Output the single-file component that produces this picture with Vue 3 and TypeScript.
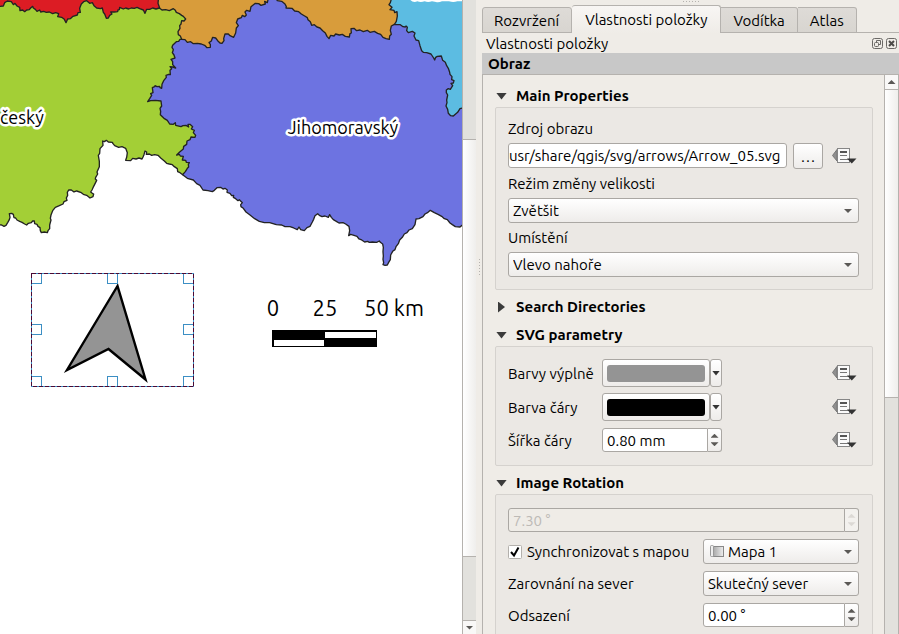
<script setup lang="ts">
import { reactive, ref } from 'vue'

const tabs = ['Rozvržení', 'Vlastnosti položky', 'Vodítka', 'Atlas']
const activeTab = ref('Vlastnosti položky')

const open = reactive({ main: true, search: false, svg: true, rotation: true })

const source = ref('usr/share/qgis/svg/arrows/Arrow_05.svg')
const resizeMode = ref('Zvětšit')
const placement = ref('Vlevo nahoře')
const strokeWidth = ref('0.80 mm')
const rotation = ref('7.30 °')
const syncWithMap = ref(true)
const map = ref('Mapa 1')
const north = ref('Skutečný sever')
const offset = ref('0.00 °')

const colors = [
  { id: 'fill', label: 'Barvy výplně', value: '#949494' },
  { id: 'stroke', label: 'Barva čáry', value: '#000000' },
]

const handles = [
  [31, 273], [107, 273], [183, 273],
  [31, 324], [183, 324],
  [31, 376], [107, 376], [183, 376],
]
</script>

<template>
  <div class="window">
    <main class="canvas">
      <svg class="map" viewBox="0 0 462 634" preserveAspectRatio="xMinYMin slice" role="img" aria-label="Mapa">
        <g transform="scale(0.33333)" stroke="#232323" stroke-width="4" stroke-linejoin="round">
          <path fill="#dc1c24" stroke="none" d="M0 0H478V90H0Z" />
          <path fill="#d89c3b" d="M476 -10L474 10L479 24L476 32L500 160L1240 160L1240 -10Z" />
          <path fill="#5cbce2" d="M1176 -10L1171 8L1167 14L1176 22L1170 29L1182 31L1184 38L1191 35L1192 48L1189 64L1184 72L1240 300L1340 360L1400 330L1400 -10Z" />
          <path fill="#a3cf36" d="M-10 22L0 19L10 18L14 8L22 3L34 5L40 14L45 10L51 18L59 22L60 32L68 30L74 35L80 30L88 29L92 24L98 19L100 24L106 28L111 34L119 30L122 36L131 34L139 37L148 36L158 41L167 38L176 41L173 50L185 52L193 58L198 68L203 57L211 56L219 49L232 45L234 38L241 37L239 25L244 12L251 5L260 2L269 10L277 8L282 17L290 24L301 26L307 24L310 37L314 42L319 55L325 54L329 46L336 42L332 36L343 36L353 35L354 30L358 29L359 22L370 27L377 24L386 27L394 24L403 25L411 22L419 26L430 30L435 40L440 28L449 28L458 24L468 27L478 24L486 30L497 29L508 32L520 26L526 31L529 37L538 41L545 46L550 49L557 57L552 63L545 62L543 72L539 77L540 85L534 95L535 104L541 108L545 118L620 350L610 470L548 524L540 518L533 515L532 506L523 500L517 494L508 492L500 490L493 483L483 475L474 466L464 464L455 466L448 462L439 463L440 456L435 453L432 464L429 471L426 477L417 474L408 477L398 475L392 482L377 481L380 472L382 458L377 445L366 440L356 442L344 437L339 431L337 427L325 426L319 421L313 425L308 423L309 436L300 446L299 460L295 466L298 484L298 500L291 516L293 522L287 532L286 537L290 541L281 559L276 570L272 576L277 580L281 582L279 590L270 594L260 586L250 583L244 578L230 573L222 576L214 570L206 570L202 577L203 586L199 594L201 601L192 605L189 612L178 617L166 622L158 632L153 645L151 655L153 660L149 675L149 686L144 692L142 698L133 696L124 698L121 692L120 683L114 679L111 673L104 671L103 663L98 663L94 668L85 670L80 675L74 672L66 667L59 664L51 660L47 654L42 653L40 643L35 640L28 641L30 652L28 659L23 668L18 676L12 679L5 675L-10 674Z" />
          <path fill="#6d73e1" d="M545 118L555 119L562 127L572 125L580 131L592 130L604 132L614 136L621 143L631 142L631 133L627 128L634 123L638 112L647 114L653 122L660 129L666 130L672 122L671 116L675 102L685 102L690 107L701 112L707 99L709 84L715 77L709 68L713 57L724 53L727 46L734 50L739 45L735 36L740 31L750 34L753 20L766 10L776 11L783 16L796 12L794 4L802 8L806 -10H826L832 2L845 4L855 12L859 20L858 24L876 25L884 33L896 35L904 42L914 48L922 53L924 59L931 65L935 76L943 74L951 81L960 84L968 92L976 99L981 109L987 116L992 106L1002 108L1007 102L1018 105L1027 103L1036 109L1048 111L1050 101L1054 99L1053 86L1062 85L1070 92L1080 90L1090 95L1102 91L1110 97L1123 94L1133 100L1142 103L1149 112L1158 116L1168 118L1169 108L1174 103L1171 91L1174 78L1183 73L1192 74L1201 74L1209 80L1216 81L1218 78L1222 82L1220 92L1225 98L1237 94L1245 99L1242 108L1248 120L1256 122L1260 137L1265 152L1270 157L1280 158L1293 162L1301 174L1304 180L1307 172L1312 169L1324 168L1328 181L1336 187L1340 197L1345 205L1349 217L1350 223L1356 230L1355 239L1362 242L1360 249L1353 250L1358 257L1351 268L1345 266L1339 270L1339 278L1343 285L1340 300L1341 308L1338 318L1343 328L1345 340L1352 347L1360 348L1373 337L1380 326L1400 321V672L1386 676L1380 681L1366 680L1357 674L1350 669L1342 659L1333 656L1325 649L1314 643L1303 638L1291 631L1284 637L1275 642L1269 650L1257 656L1248 657L1245 674L1237 686L1227 690L1221 698L1213 702L1207 712L1199 720L1195 731L1188 740L1185 749L1178 754L1172 765L1171 779L1166 787L1162 795L1155 796L1149 794L1151 788L1149 778L1150 768L1149 755L1150 742L1148 732L1141 727L1138 723L1130 727L1117 726L1108 727L1103 724L1094 726L1085 720L1077 717L1071 709L1062 706L1052 703L1046 707L1049 692L1047 679L1037 672L1029 668L1017 669L1009 664L1000 659L994 652L989 644L985 652L975 648L966 650L958 646L953 641L945 647L941 658L937 666L930 679L921 683L913 692L902 689L897 681L892 689L881 684L870 680L855 680L845 675L829 674L809 668L793 668L778 664L764 656L750 645L738 636L730 625L723 620L722 614L727 608L718 599L714 602L707 596L700 592L701 586L695 587L690 580L681 577L682 570L675 565L669 567L662 562L651 563L643 571L637 575L624 572L609 570L600 556L590 551L580 540L562 535L548 524L556 515L562 505L566 501L565 493L568 488L559 487L557 481L547 480L550 469L541 468L538 463L530 465L539 456L550 447L551 439L560 433L561 423L570 419L573 411L585 412L587 406L580 398L583 391L574 387L578 380L570 373L564 373L566 381L558 376L549 377L543 380L527 376L526 368L520 373L509 372L502 361L492 355L481 344L482 334L480 325L485 318L483 303L466 301L452 302L443 305L449 296L455 286L452 281L459 278L457 263L464 260L465 257L471 260L479 259L480 263L485 265L486 253L491 242L499 232L498 226L506 223L511 224L510 211L515 206L510 200L518 201L527 204L518 194L518 185L513 178L525 174L522 165L517 158L520 149L516 142L518 136L529 125L536 124L540 118Z" />
          <path fill="#fff" stroke="none" d="M1231 0Q1240 9 1252 4Q1262 8 1274 4Q1284 8 1296 4L1308 6Q1316 8 1326 4H1347Q1360 8 1372 4H1386V0Z" />
        </g>

        <g class="map-label">
          <text x="0" y="124">český</text>
          <text x="343" y="134" text-anchor="middle">Jihomoravský</text>
        </g>

        <path d="M117.5 286L67 370L108.5 349L145.5 379.5Z" fill="#949494" stroke="#000" stroke-width="2.4" />
        <g fill="none" stroke="#3c8fc4" shape-rendering="crispEdges">
          <rect v-for="[x, y] in handles" :key="`${x}-${y}`" :x="x + 0.5" :y="y + 0.5" width="10" height="10" />
          <rect x="31.5" y="273.5" width="162" height="113" />
          <rect x="31.5" y="273.5" width="162" height="113" stroke="#4b0a35" stroke-dasharray="4 2" />
        </g>

        <g class="scale-label" text-anchor="middle">
          <text x="273" y="316">0</text>
          <text x="325" y="316">25</text>
          <text x="394" y="316">50 km</text>
        </g>
        <path d="M272 330H377V347H272Z" fill="#000" />
        <path d="M325 332H376V338H325ZM274 340H324V346H274Z" fill="#fff" />
      </svg>
    </main>

    <div class="scrollbar map-scroll" aria-hidden="true">
      <span class="trough-top"></span>
      <span class="thumb"></span>
      <span class="trough-bottom"></span>
      <span class="step"><i class="tri down"></i></span>
    </div>

    <div class="splitter" aria-hidden="true"><i v-for="n in 6" :key="n"></i></div>

    <aside class="dock">
      <div class="grip" aria-hidden="true"><i v-for="n in 6" :key="n"></i></div>
      <nav class="tabs" role="tablist">
        <button
          v-for="tab in tabs"
          :key="tab"
          type="button"
          role="tab"
          class="tab"
          :class="{ active: tab === activeTab }"
          :aria-selected="tab === activeTab"
          @click="activeTab = tab"
        >{{ tab }}</button>
      </nav>

      <header class="dock-title">
        <span>Vlastnosti položky</span>
        <button type="button" class="title-button" aria-label="Odpojit">
          <svg viewBox="0 0 12 12" fill="none" stroke="#6b6966">
            <rect x="0.5" y="0.5" width="10" height="10" rx="2" />
            <path d="M4.5 4V2.5H8.5V6.5H7" /><rect x="2.5" y="4.5" width="4" height="4" rx="1" />
          </svg>
        </button>
        <button type="button" class="title-button" aria-label="Zavřít">
          <svg viewBox="0 0 12 12" fill="none" stroke="#6b6966">
            <rect x="0.5" y="0.5" width="10" height="10" rx="2" />
            <path d="M3 3L8 8M8 3L3 8" stroke="#4c4a48" stroke-width="2" />
          </svg>
        </button>
      </header>
      <h1 class="item-title">Obraz</h1>

      <div class="body">
        <div class="content">
          <section>
            <button type="button" class="heading" :aria-expanded="open.main" @click="open.main = !open.main">
              <i class="marker" :class="{ closed: !open.main }"></i>Main Properties
            </button>
            <div v-if="open.main" class="group main-group">
              <label for="source">Zdroj obrazu</label>
              <div class="source-row">
                <input id="source" v-model="source" type="text" class="field path" />
                <button type="button" class="browse">…</button>
                <button type="button" class="override" aria-label="Datově definované přepsání">
                  <svg viewBox="0 0 26 18"><use href="#override-icon" /></svg>
                </button>
              </div>
              <label for="resize">Režim změny velikosti</label>
              <div class="combo">
                <select id="resize" v-model="resizeMode"><option>Zvětšit</option></select>
              </div>
              <label for="placement">Umístění</label>
              <div class="combo">
                <select id="placement" v-model="placement"><option>Vlevo nahoře</option></select>
              </div>
            </div>
          </section>

          <section>
            <button type="button" class="heading" :aria-expanded="open.search" @click="open.search = !open.search">
              <i class="marker" :class="{ closed: !open.search }"></i>Search Directories
            </button>
          </section>

          <section>
            <button type="button" class="heading" :aria-expanded="open.svg" @click="open.svg = !open.svg">
              <i class="marker" :class="{ closed: !open.svg }"></i>SVG parametry
            </button>
            <div v-if="open.svg" class="group svg-group">
              <div v-for="color in colors" :key="color.id" class="param-row">
                <label :for="color.id">{{ color.label }}</label>
                <div class="color-control">
                  <button :id="color.id" type="button" class="color-button">
                    <span class="swatch" :style="{ background: color.value }"></span>
                  </button>
                  <button type="button" class="color-menu" :aria-label="color.label"><i class="tri dark down"></i></button>
                </div>
                <button type="button" class="override" aria-label="Datově definované přepsání">
                  <svg viewBox="0 0 26 18"><use href="#override-icon" /></svg>
                </button>
              </div>
              <div class="param-row">
                <label for="stroke-width">Šířka čáry</label>
                <div class="spin">
                  <input id="stroke-width" v-model="strokeWidth" type="text" class="field" />
                  <span class="steps"><i class="tri up"></i><i class="tri down"></i></span>
                </div>
                <button type="button" class="override" aria-label="Datově definované přepsání">
                  <svg viewBox="0 0 26 18"><use href="#override-icon" /></svg>
                </button>
              </div>
            </div>
          </section>

          <section>
            <button type="button" class="heading" :aria-expanded="open.rotation" @click="open.rotation = !open.rotation">
              <i class="marker" :class="{ closed: !open.rotation }"></i>Image Rotation
            </button>
            <div v-if="open.rotation" class="group rotation-group">
              <div class="spin wide disabled">
                <input v-model="rotation" type="text" class="field" aria-label="Image Rotation" disabled />
                <span class="steps"><i class="tri up"></i><i class="tri down"></i></span>
              </div>
              <label class="check">
                <input v-model="syncWithMap" type="checkbox" />
                <svg viewBox="0 0 14 14" aria-hidden="true">
                  <rect x="0.5" y="0.5" width="13" height="13" rx="1" fill="#fff" stroke="#b3b0ac" />
                  <path v-if="syncWithMap" d="M3 7L6 10.5L10.5 2.5" fill="none" stroke="#000" stroke-width="2" />
                </svg>
                Synchronizovat s mapou
              </label>
              <div class="combo with-icon">
                <svg viewBox="0 0 14 13" aria-hidden="true">
                  <defs>
                    <linearGradient id="sheet"><stop offset="0" stop-color="#aaa" /><stop offset="1" stop-color="#eee" /></linearGradient>
                  </defs>
                  <rect x="3.5" y="1.5" width="10" height="10" fill="url(#sheet)" stroke="#888" />
                  <rect x="0.5" y="0.5" width="3" height="11" rx="1" fill="#eee" stroke="#999" />
                </svg>
                <select v-model="map" aria-label="Mapa"><option>Mapa 1</option></select>
              </div>
              <label for="north">Zarovnání na sever</label>
              <div class="combo">
                <select id="north" v-model="north"><option>Skutečný sever</option></select>
              </div>
              <label for="offset">Odsazení</label>
              <div class="spin">
                <input id="offset" v-model="offset" type="text" class="field" />
                <span class="steps"><i class="tri up"></i><i class="tri down"></i></span>
              </div>
            </div>
          </section>
        </div>

        <div class="scrollbar dock-scroll" aria-hidden="true">
          <span class="step"><i class="tri up"></i></span>
          <span class="thumb"></span>
          <span class="trough-bottom"></span>
        </div>
      </div>
    </aside>

    <svg class="defs" aria-hidden="true">
      <symbol id="override-icon" viewBox="0 0 26 18">
        <path d="M5 2.5V14L0.5 8.5Z" fill="#8f8f8f" stroke="#777" />
        <rect x="5.5" y="1.5" width="12" height="14" fill="#fafafa" stroke="#868686" />
        <path d="M8 5H15" stroke="#555" stroke-width="2" />
        <path d="M8 8.5H15M8 12.5H17" stroke="#777" />
        <path d="M15 11.5H24.5L19.75 16.5Z" fill="#333" />
      </symbol>
    </svg>
  </div>
</template>

<style>
body {
  overflow: hidden;
}
</style>

<style scoped>
* {
  box-sizing: border-box;
}

.window {
  display: grid;
  grid-template-columns: 462fr 14px 6px 417fr;
  height: 100vh;
  overflow: hidden;
  background: #efece7;
  color: #000;
  font: 15px/19px Ubuntu, "Noto Sans", sans-serif;
}

button,
input,
select {
  margin: 0;
  padding: 0;
  border: 0;
  background: none;
  color: inherit;
  font: inherit;
}

.canvas {
  min-width: 0;
  overflow: hidden;
  background: #fff;
}

.map {
  display: block;
  width: 100%;
  height: 100%;
}

.map-label {
  font-size: 18px;
  fill: #000;
  stroke: #fff;
  stroke-width: 5px;
  stroke-linejoin: round;
  paint-order: stroke;
}

.scale-label {
  font-size: 22px;
}

.defs {
  display: none;
}

.scrollbar {
  display: flex;
  flex-direction: column;
  border-left: 1px solid #b5b2ae;
  background: #e2e1dd;
}

.thumb {
  border: solid #b5b2ae;
  border-width: 1px 0;
  background: linear-gradient(90deg, #fff, #efeeec);
}

.step {
  display: grid;
  flex: 0 0 14px;
  place-items: center;
  background: #f9f8f7;
}

.map-scroll .trough-top { flex: 139; }
.map-scroll .thumb { flex: 418; }
.map-scroll .trough-bottom { flex: 63; }
.map-scroll .step { border-top: 1px solid #b5b2ae; }
.dock-scroll { border-right: 1px solid #b5b2ae; }
.dock-scroll .thumb { flex: 308; }
.dock-scroll .trough-bottom { flex: 237; }

.tri {
  width: 8px;
  height: 4px;
  background: #5b5956;
}

.tri.up { clip-path: polygon(50% 0, 100% 100%, 0 100%); }
.tri.down { clip-path: polygon(0 0, 100% 0, 50% 100%); }

.tri.dark {
  height: 5px;
  background: #333;
}

.splitter,
.grip {
  display: flex;
  align-items: center;
  justify-content: center;
  gap: 2px;
}

.splitter {
  flex-direction: column;
  padding-bottom: 100px;
}

.splitter i,
.grip i {
  width: 1px;
  height: 1px;
  background: #b5b2ae;
}

.dock {
  display: flex;
  flex-direction: column;
  min-width: 0;
  min-height: 0;
}

.grip {
  flex: 0 0 5px;
  align-items: flex-start;
  padding-top: 1px;
}

.tabs {
  display: flex;
  flex: 0 0 28px;
  align-items: flex-end;
  box-shadow: inset 0 -1px #b5b2ae;
}

.tab {
  height: 26px;
  padding: 0 12px;
  border: 1px solid #b5b2ae;
  border-left-width: 0;
  border-radius: 0 3px 0 0;
  background: linear-gradient(#dedbd7, #d8d5d0);
}

.tab:first-child {
  padding-left: 11px;
  border-left-width: 1px;
  border-radius: 3px 3px 0 0;
}

.tab.active {
  height: 28px;
  padding: 0 13px;
  border-bottom: 0;
  border-radius: 3px 3px 0 0;
  background: linear-gradient(#f8f6f4, #efece7);
}

.dock-title {
  display: flex;
  flex: 0 0 20px;
  align-items: center;
  gap: 3px;
  padding: 1px 2px 0 4px;
}

.dock-title span {
  flex: 1;
}

.title-button {
  width: 11px;
  height: 12px;
}

.title-button svg {
  display: block;
  width: 12px;
  height: 12px;
}

.item-title {
  flex: 0 0 22px;
  margin: 0;
  padding-left: 6px;
  border-bottom: 1px solid #b5b2ae;
  background: #c8c8c8;
  font-size: 15px;
  line-height: 21px;
}

.body {
  display: grid;
  flex: 1;
  grid-template-columns: minmax(0, 1fr) 15px;
  min-height: 0;
  border-left: 1px solid #b5b2ae;
}

.content {
  display: flex;
  flex-direction: column;
  gap: 6px;
  padding: 10px 11px 0 12px;
  overflow: hidden;
}

.heading {
  display: flex;
  align-items: center;
  gap: 9px;
  width: 100%;
  height: 22px;
  padding: 0 0 2px 1px;
  font-weight: 700;
}

.marker {
  width: 11px;
  height: 7px;
  margin-top: 2px;
  background: #3b3b3b;
  clip-path: polygon(0 0, 100% 0, 50% 100%);
}

.marker.closed {
  width: 7px;
  height: 11px;
  margin: 2px 2px 0;
  clip-path: polygon(0 0, 100% 50%, 0 100%);
}

.group {
  display: grid;
  border: 1px solid #d5d2ce;
  border-radius: 2px;
  background: #ebe8e4;
}

.main-group {
  gap: 5px;
  padding: 11px 13px 12px 12px;
}

.source-row {
  display: grid;
  grid-template-columns: minmax(0, 1fr) 30px 30px;
  gap: 6px;
}

.field {
  width: 100%;
  min-width: 0;
  height: 25px;
  padding: 0 4px;
  border: 1px solid #aaa7a3;
  border-radius: 3px;
  background: #fff;
  outline: none;
}

.path {
  padding: 0;
}

.browse,
.color-button,
.color-menu,
.combo select {
  border: 1px solid #aaa7a3;
  border-radius: 3px;
  background: linear-gradient(#fff, #eeecea);
}

.browse {
  height: 26px;
}

.override {
  display: flex;
  align-items: center;
  justify-content: flex-end;
  padding-right: 1px;
}

.override svg {
  width: 26px;
  height: 18px;
}

.combo {
  position: relative;
  min-width: 0;
}

.combo select {
  display: block;
  width: 100%;
  height: 25px;
  padding: 0 22px 0 4px;
  appearance: none;
  outline: none;
}

.combo::after {
  position: absolute;
  top: 11px;
  right: 7px;
  width: 8px;
  height: 4px;
  background: #5b5956;
  clip-path: polygon(0 0, 100% 0, 50% 100%);
  content: "";
  pointer-events: none;
}

.combo.with-icon select {
  padding-left: 24px;
}

.combo.with-icon svg {
  position: absolute;
  top: 6px;
  left: 7px;
  width: 14px;
  height: 13px;
  pointer-events: none;
}

.svg-group {
  gap: 6px;
  padding: 12px 13px 12px 12px;
}

.param-row {
  display: grid;
  grid-template-columns: 94px 120px minmax(0, 1fr);
  align-items: center;
  min-height: 26px;
}

.color-control {
  display: grid;
  grid-template-columns: minmax(0, 1fr) 12px;
}

.color-button {
  height: 28px;
  padding: 4px;
}

.swatch {
  display: block;
  height: 17px;
  border-radius: 3px;
}

.color-menu {
  display: grid;
  place-items: center;
}

.spin {
  display: grid;
  grid-template-columns: minmax(0, 1fr) 14px;
}

.spin .field {
  height: 24px;
  border-radius: 3px 0 0 3px;
}

.steps {
  display: flex;
  flex-direction: column;
  align-items: center;
  justify-content: space-evenly;
  border: 1px solid #aaa7a3;
  border-left: 0;
  border-radius: 0 3px 3px 0;
  background: linear-gradient(#fff, #eeecea);
}

.disabled .field {
  background: #efece7;
  color: #bdbab6;
}

.disabled .steps {
  background: #f3f1ee;
}

.disabled .tri {
  background: #dcd9d5;
}

.rotation-group {
  grid-template-columns: minmax(0, 195fr) minmax(0, 156fr);
  align-items: center;
  gap: 7px 0;
  padding: 13px 13px 12px 12px;
}

.wide {
  grid-column: 1 / -1;
}

.check {
  display: flex;
  position: relative;
  align-items: center;
  gap: 5px;
  white-space: nowrap;
}

.check input {
  position: absolute;
  width: 14px;
  height: 14px;
  opacity: 0;
}

.check svg {
  width: 14px;
  height: 14px;
}
</style>
